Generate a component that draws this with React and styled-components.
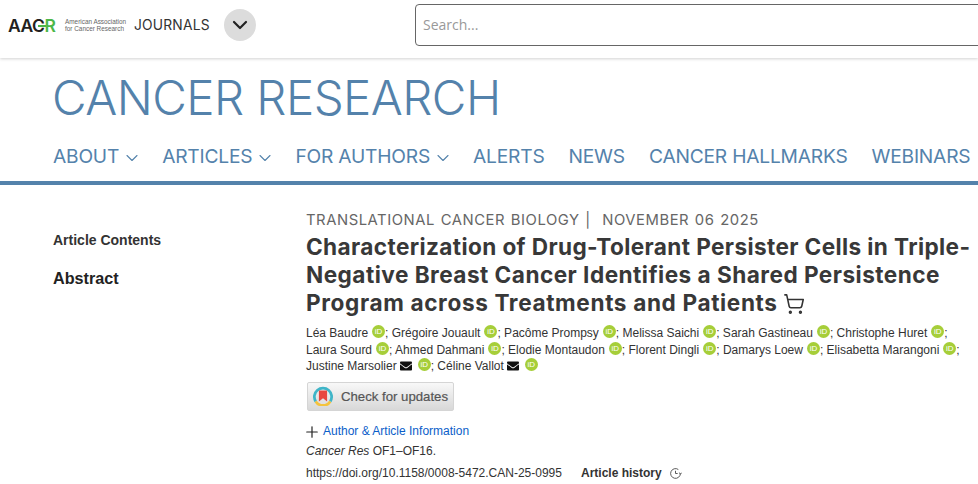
import React from 'react'
import styled, { createGlobalStyle } from 'styled-components'
import { FaEnvelope } from 'react-icons/fa'
import { ChevronDown, Plus, ShoppingCart } from 'lucide-react'

const GlobalStyle = createGlobalStyle`
  html, body {
    margin: 0;
    padding: 0;
    height: 484px;
    overflow: hidden;
    background: #fff;
    font-family: "Liberation Sans", Arial, sans-serif;
  }
`

const Page = styled.div`
  width: 978px;
  height: 484px;
  overflow: hidden;
`

const TopBar = styled.div`
  height: 58px;
  box-sizing: border-box;
  display: flex;
  align-items: center;
  padding: 0 0 8px 8px;
  box-shadow: 0 1px 3px rgba(0, 0, 0, 0.18);
`

const Logo = styled.div`
  display: flex;
  align-items: center;
  width: 126px;
  flex: none;
`

const LogoMark = styled.div`
  font-family: Inter, sans-serif;
  font-weight: 600;
  font-size: 17.5px;
  letter-spacing: -0.5px;
  color: #231f20;
  width: 54px;
  flex: none;
  white-space: nowrap;
`

const LogoGreen = styled.span`
  position: relative;
  color: #4cb748;

  &::before {
    content: '';
    position: absolute;
    left: -6px;
    top: 10px;
    width: 8px;
    height: 2px;
    background: #4cb748;
  }
`

const LogoText = styled.div`
  font-size: 6.4px;
  line-height: 7.5px;
  color: #666;
  white-space: nowrap;
  margin-left: 3px;
`

const Journals = styled.div`
  font-family: Inter, sans-serif;
  font-size: 13.8px;
  letter-spacing: 0.2px;
  color: #333;
  width: 90px;
  flex: none;
`

const Round = styled.div`
  width: 32px;
  height: 32px;
  flex: none;
  border-radius: 50%;
  background: #dcdcdc;
  color: #222;
  display: flex;
  align-items: center;
  justify-content: center;
`

const Search = styled.div`
  margin-left: 159px;
  width: 620px;
  height: 42px;
  flex: none;
  box-sizing: border-box;
  border: 1px solid #666;
  border-radius: 4px;
  padding: 0 0 2px 7px;
  display: flex;
  align-items: center;
  font-family: "Open Sans", sans-serif;
  font-size: 14px;
  color: #999;
`

const Brand = styled.div`
  height: 127px;
  box-sizing: border-box;
  padding: 12px 0 0 53px;
  border-bottom: 4px solid #5482ab;
  color: #5482ab;
`

const JournalTitle = styled.div`
  font-family: Inter, sans-serif;
  font-weight: 300;
  font-size: 47.5px;
  line-height: 56px;
  letter-spacing: -0.55px;
  white-space: nowrap;
  margin-left: -1px;
`

const Nav = styled.div`
  display: flex;
  margin-top: 18px;
  gap: 24px;
  white-space: nowrap;
`

const NavItem = styled.div`
  font-family: Inter, sans-serif;
  font-weight: 400;
  font-size: 19.2px;
  line-height: 24px;
  display: flex;
  align-items: center;
  letter-spacing: -0.2px;
`

const NavChevron = styled(ChevronDown)`
  margin: 3px -4px 0 3px;
`

const Content = styled.div`
  display: flex;
  padding: 27px 0 0 53px;
`

const Side = styled.div`
  width: 253px;
  flex: none;
  padding-top: 20px;
`

const SideHead = styled.div`
  font-size: 14px;
  font-weight: 700;
  line-height: 16px;
  color: #333;
`

const SideLink = styled.div`
  font-size: 16.2px;
  font-weight: 700;
  line-height: 18px;
  color: #222;
  margin-top: 21px;
`

const Main = styled.div`
  width: 672px;
`

const Category = styled.div`
  font-family: Inter, sans-serif;
  font-size: 14.8px;
  line-height: 16px;
  letter-spacing: 0.55px;
  color: #666;
  white-space: nowrap;
  word-spacing: 1px;
`

const Title = styled.h1`
  margin: 5px 0 0;
  font-family: Inter, sans-serif;
  font-weight: 700;
  font-size: 22.6px;
  line-height: 28px;
  color: #383838;
  width: 672px;
`

const TitleLine = styled.div`
  white-space: nowrap;
  display: flex;
  align-items: center;
  letter-spacing: ${(p) => p.$spacing}px;
`

const Cart = styled(ShoppingCart)`
  margin: 1px 0 0 5px;
  color: #333;
`

const Authors = styled.div`
  margin-top: 8px;
  font-size: 12px;
  line-height: 16.5px;
  color: #333;
`

const AuthorLine = styled.div`
  white-space: nowrap;
  display: flex;
  align-items: center;
`

const Orcid = styled.span`
  width: 13px;
  height: 13px;
  border-radius: 50%;
  background: #a6ce39;
  color: #fff;
  font-size: 8px;
  font-weight: 400;
  line-height: 13px;
  text-align: center;
  display: inline-block;
  margin: -3px 0 0 4px;
  flex: none;
`

const Mail = styled(FaEnvelope)`
  margin: 0 2px 0 3px;
  color: #111;
  flex: none;
`

const Updates = styled.div`
  margin: 7px 0 0 1px;
  width: 147px;
  height: 29px;
  box-sizing: border-box;
  border: 1px solid #d5d5d5;
  border-radius: 2px;
  background: linear-gradient(#f8f8f8, #d8d8d8);
  display: flex;
  align-items: center;
  padding-left: 5px;
  gap: 8px;
  font-size: 13.2px;
  color: #555;
  -webkit-text-stroke: 0.2px #555;
  white-space: nowrap;
`

const InfoRow = styled.div`
  display: flex;
  align-items: center;
  margin-top: 12px;
  font-size: 12px;
  line-height: 15px;
  color: #0b5ec9;
`

const InfoPlus = styled(Plus)`
  color: #222;
  margin: 0 2px 0 -3px;
`

const Citation = styled.div`
  margin-top: 3px;
  font-size: 12px;
  line-height: 15px;
  color: #333;
`

const DoiRow = styled.div`
  display: flex;
  align-items: center;
  margin-top: 7px;
  font-size: 12px;
  line-height: 15px;
  color: #333;
  white-space: nowrap;
`

const History = styled.span`
  font-weight: 700;
  margin: 0 7px 0 19px;
`

const CrossMark = () => (
  <svg width="20" height="20" viewBox="0 0 22 22" fill="none">
    <path d="M3 17A9.5 9.5 0 1 1 19 17" stroke="#3fb5c8" strokeWidth="3" />
    <path d="M3 17A9.5 9.5 0 0 0 19 17" stroke="#f4c33d" strokeWidth="3" />
    <path d="M6.5 5h9v12l-4.5-3.5L6.5 17z" fill="#e8463f" />
  </svg>
)

const Clock = () => (
  <svg width="13" height="13" viewBox="0 0 12 12" fill="none" stroke="#555" strokeWidth="0.9">
    <path d="M10.5 6A4.5 4.5 0 1 1 8.6 2.3" />
    <path d="M6 3.5V6h2" />
    <path d="M9.2 5.2l1.4 1.3 1.2-1.3" />
  </svg>
)

const navItems = [
  ['ABOUT', true],
  ['ARTICLES', true],
  ['FOR AUTHORS', true],
  ['ALERTS'],
  ['NEWS'],
  ['CANCER HALLMARKS'],
  ['WEBINARS'],
]

const Id = () => <Orcid>iD</Orcid>

export default function App() {
  return (
    <Page>
      <GlobalStyle />
      <TopBar>
        <Logo>
          <LogoMark>
            AAC<LogoGreen>R</LogoGreen>
          </LogoMark>
          <LogoText>
            American Association
            <br />
            for Cancer Research
          </LogoText>
        </Logo>
        <Journals>JOURNALS</Journals>
        <Round>
          <ChevronDown size={24} strokeWidth={2.2} />
        </Round>
        <Search>Search...</Search>
      </TopBar>
      <Brand>
        <JournalTitle>CANCER RESEARCH</JournalTitle>
        <Nav>
          {navItems.map(([label, menu]) => (
            <NavItem key={label}>
              {label}
              {menu && <NavChevron size={20} strokeWidth={1.3} />}
            </NavItem>
          ))}
        </Nav>
      </Brand>
      <Content>
        <Side>
          <SideHead>Article Contents</SideHead>
          <SideLink>Abstract</SideLink>
        </Side>
        <Main>
          <Category>TRANSLATIONAL CANCER BIOLOGY | &nbsp;NOVEMBER 06 2025</Category>
          <Title>
            <TitleLine $spacing={0.38}>Characterization of Drug-Tolerant Persister Cells in Triple-</TitleLine>
            <TitleLine $spacing={0.47}>Negative Breast Cancer Identifies a Shared Persistence</TitleLine>
            <TitleLine $spacing={0.63}>
              Program across Treatments and Patients
              <Cart size={22} strokeWidth={1.7} />
            </TitleLine>
          </Title>
          <Authors>
            <AuthorLine>
              Léa Baudre <Id />; Grégoire Jouault <Id />; Pacôme Prompsy <Id />; Melissa Saichi <Id />; Sarah Gastineau <Id />; Christophe Huret <Id />;
            </AuthorLine>
            <AuthorLine>
              Laura Sourd <Id />; Ahmed Dahmani <Id />; Elodie Montaudon <Id />; Florent Dingli <Id />; Damarys Loew <Id />; Elisabetta Marangoni <Id />;
            </AuthorLine>
            <AuthorLine>
              Justine Marsolier <Mail size={12} /> <Id />; Céline Vallot <Mail size={12} /> <Id />
            </AuthorLine>
          </Authors>
          <Updates>
            <CrossMark />
            Check for updates
          </Updates>
          <InfoRow>
            <InfoPlus size={18} strokeWidth={1.6} />
            Author &amp; Article Information
          </InfoRow>
          <Citation>
            <i>Cancer Res</i> OF1–OF16.
          </Citation>
          <DoiRow>
            https://doi.org/10.1158/0008-5472.CAN-25-0995
            <History>Article history</History>
            <Clock />
          </DoiRow>
        </Main>
      </Content>
    </Page>
  )
}
